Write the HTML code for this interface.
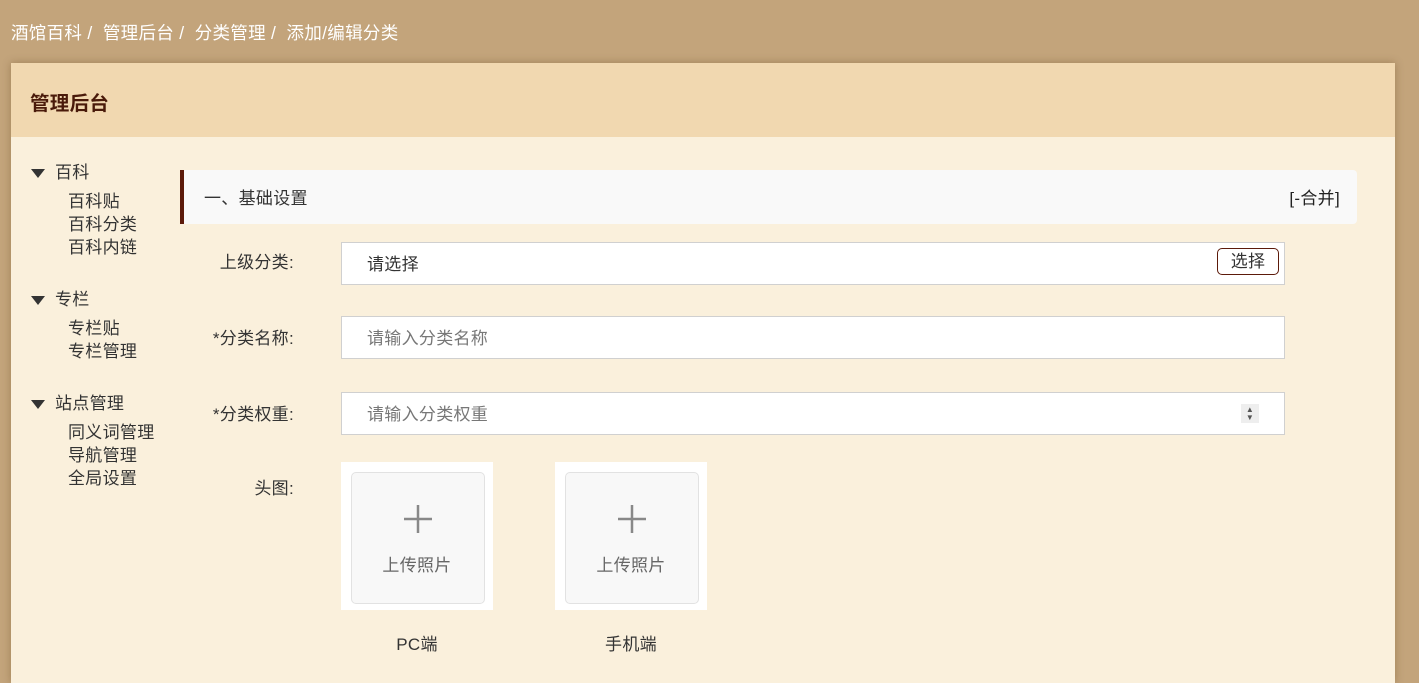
<!DOCTYPE html>
<html><head><meta charset="utf-8"><style>
*{margin:0;padding:0;box-sizing:border-box}
body{width:1419px;height:662px;overflow:hidden;background:#c3a47b;font-family:"Liberation Sans","Noto Sans CJK SC",sans-serif;position:relative;color:#333;letter-spacing:0.3px}
.a{position:absolute;white-space:nowrap}
.bc{left:11px;top:21px;font-size:17.5px;color:#fff;line-height:24px}
.card{left:11px;top:63px;width:1384px;height:620px;background:#faf0dc;box-shadow:0 0 8px rgba(90,60,20,.35)}
.hd{left:0;top:0;width:1384px;height:74px;background:#f1d8b0}
.hd span{position:absolute;left:19px;top:24px;font-size:19.5px;font-weight:bold;color:#4a1a0a}
.tri{width:0;height:0;border-left:7px solid transparent;border-right:7px solid transparent;border-top:9px solid #333}
.s{font-size:17px;color:#333;line-height:23px}
.bar{left:169px;top:107px;width:1177px;height:54px;background:#f9f9f9;border-left:4px solid #5c1a0a;border-radius:0 4px 4px 0}
.lbl{font-size:17px;color:#333;text-align:right;width:122px}
.in{left:330px;width:944px;height:43px;background:#fff;border:1px solid #d0d0d0}
.ph{position:absolute;left:25px;top:7px;font-size:17px;color:#777}
.up{width:152px;height:148px;background:#fff}
.up .i{position:absolute;left:10px;top:10px;width:134px;height:132px;background:#f8f8f8;border:1px solid #e2e2e2;border-radius:5px}
.up .t{position:absolute;left:0;width:100%;top:89px;text-align:center;font-size:17px;color:#666}
</style></head><body>
<div class="a bc">酒馆百科 /&nbsp; 管理后台 /&nbsp; 分类管理 /&nbsp; 添加/编辑分类</div>
<div class="a card">
 <div class="a hd"><span>管理后台</span></div>
 <div class="a tri" style="left:20px;top:106px"></div><div class="a s" style="left:44px;top:98px">百科</div>
 <div class="a s" style="left:57px;top:127px">百科贴<br>百科分类<br>百科内链</div>
 <div class="a tri" style="left:20px;top:233px"></div><div class="a s" style="left:44px;top:225px">专栏</div>
 <div class="a s" style="left:57px;top:254px">专栏贴<br>专栏管理</div>
 <div class="a tri" style="left:20px;top:337px"></div><div class="a s" style="left:44px;top:329px">站点管理</div>
 <div class="a s" style="left:57px;top:358px">同义词管理<br>导航管理<br>全局设置</div>
 <div class="a bar"><span class="a" style="left:20px;top:14px;font-size:17px">一、基础设置</span><span class="a" style="right:17px;top:14px;font-size:17px;color:#222">[-合并]</span></div>
 <div class="a lbl" style="left:161px;top:185px">上级分类:</div>
 <div class="a in" style="top:179px"><span class="ph" style="color:#333">请选择</span><span class="a" style="left:875px;top:5px;width:62px;height:27px;border:1px solid #5c1a0a;border-radius:5px;font-size:17px;text-align:center;line-height:25px">选择</span></div>
 <div class="a lbl" style="left:161px;top:261px">*分类名称:</div>
 <div class="a in" style="top:253px"><span class="ph">请输入分类名称</span></div>
 <div class="a lbl" style="left:161px;top:337px">*分类权重:</div>
 <div class="a in" style="top:329px"><span class="ph">请输入分类权重</span><span class="a" style="left:899px;top:11px;width:18px;height:19px;background:#eee;font-size:8px;line-height:8px;text-align:center;padding-top:2px;color:#555">▲<br>▼</span></div>
 <div class="a lbl" style="left:161px;top:411px">头图:</div>
 <div class="a up" style="left:330px;top:399px"><div class="i"></div>
  <svg class="a" style="left:62px;top:42px" width="30" height="30"><path d="M15 1V29M1 15H29" stroke="#888" stroke-width="2.5"/></svg>
  <div class="t">上传照片</div></div>
 <div class="a up" style="left:544px;top:399px"><div class="i"></div>
  <svg class="a" style="left:62px;top:42px" width="30" height="30"><path d="M15 1V29M1 15H29" stroke="#888" stroke-width="2.5"/></svg>
  <div class="t">上传照片</div></div>
 <div class="a" style="left:330px;width:152px;text-align:center;top:567px;font-size:17px">PC端</div>
 <div class="a" style="left:544px;width:152px;text-align:center;top:567px;font-size:17px">手机端</div>
</div>
</body></html>
